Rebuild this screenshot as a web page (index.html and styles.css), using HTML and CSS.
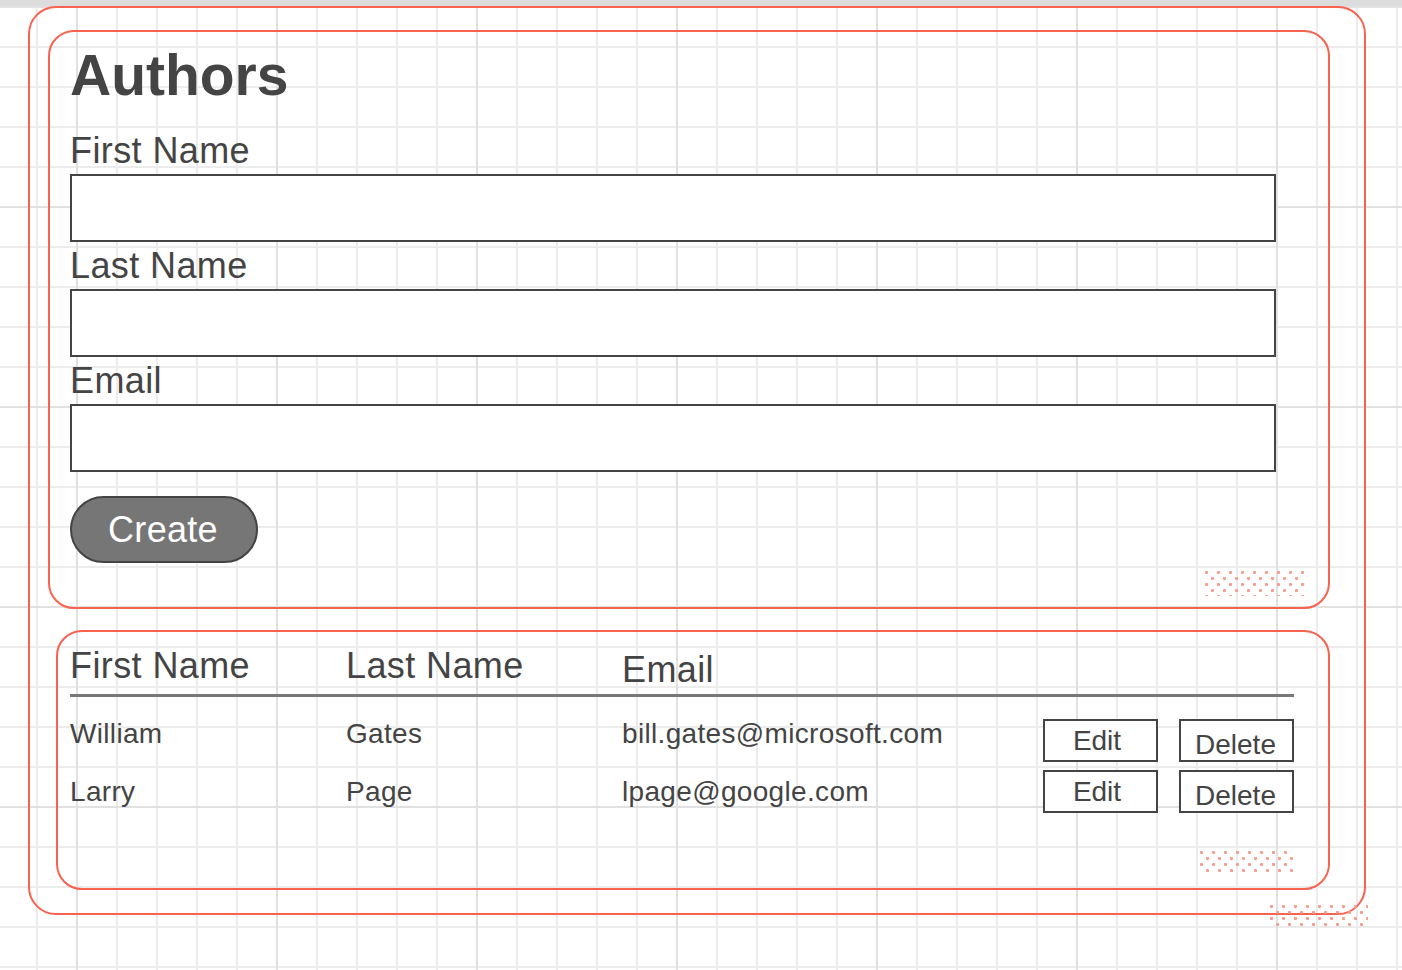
FILE: index.html
```html
<!DOCTYPE html>
<html lang="en">
<head>
<meta charset="utf-8">
<title>Authors</title>
<link rel="stylesheet" href="styles.css">
</head>
<body>
<div class="topbar"></div>
<div class="outer">
  <section class="card form-card">
    <h1 class="title">Authors</h1>
    <label class="field-label first">First Name</label>
    <div class="input"></div>
    <label class="field-label">Last Name</label>
    <div class="input"></div>
    <label class="field-label">Email</label>
    <div class="input"></div>
    <button class="create">Create</button>
    <div class="dots dots-form"></div>
  </section>
  <section class="card table-card">
    <div class="cols head">
      <div class="th">First Name</div>
      <div class="th">Last Name</div>
      <div class="th th-email">Email</div>
    </div>
    <div class="cols row row-1">
      <div class="td">William</div>
      <div class="td">Gates</div>
      <div class="td">bill.gates@microsoft.com</div>
      <button class="act edit">Edit</button>
      <button class="act del">Delete</button>
    </div>
    <div class="cols row row-2">
      <div class="td">Larry</div>
      <div class="td">Page</div>
      <div class="td">lpage@google.com</div>
      <button class="act edit">Edit</button>
      <button class="act del">Delete</button>
    </div>
    <div class="dots dots-table"></div>
  </section>
  <div class="dots dots-outer"></div>
</div>
</body>
</html>
```

FILE: styles.css
```css
html {
  background-color: #ffffff;
  background-image:
    linear-gradient(to right, #e1e1e1 2px, transparent 2px),
    linear-gradient(to bottom, #e1e1e1 2px, transparent 2px),
    linear-gradient(to right, #ececec 2px, transparent 2px),
    linear-gradient(to bottom, #ececec 2px, transparent 2px);
  background-size: 200px 200px, 200px 200px, 40px 40px, 40px 40px;
  background-position: 76px 0, 0 6px, 36px 0, 0 6px;
  min-height: 100%;
}

body {
  margin: 0;
  min-height: 970px;
  font-family: "Liberation Sans", Arial, sans-serif;
  color: #444444;
}

.topbar {
  height: 6px;
  background: #dcdcdc;
}

.outer {
  position: relative;
  box-sizing: border-box;
  width: 1338px;
  margin-left: 28px;
  border: 2px solid #f9624f;
  border-radius: 28px;
  padding: 22px 34px 23px 18px;
}

.card {
  position: relative;
  border: 2px solid #f9624f;
  border-radius: 26px;
}

.form-card {
  padding: 13px 52px 44px 20px;
}

.title {
  margin: 0;
  font-size: 57px;
  line-height: 60px;
  font-weight: bold;
}

.field-label {
  display: block;
  font-size: 36px;
  line-height: 47px;
  letter-spacing: 0.4px;
}

.field-label.first {
  margin-top: 22px;
}

.input {
  box-sizing: border-box;
  height: 68px;
  background: #ffffff;
  border: 2px solid #444444;
}

.create {
  display: block;
  box-sizing: border-box;
  margin-top: 24px;
  width: 188px;
  height: 67px;
  padding: 0 2px 0 0;
  background: #767676;
  border: 2px solid #444444;
  border-radius: 34px;
  color: #ffffff;
  font-family: "Liberation Sans", Arial, sans-serif;
  font-size: 36px;
  letter-spacing: 0.3px;
}

.table-card {
  margin-top: 21px;
  margin-left: 8px;
  padding: 0 34px 75px 12px;
}

.cols {
  display: grid;
  grid-template-columns: 276px 276px 421px 136px 115px;
  align-items: start;
}

.head {
  padding-top: 12px;
  padding-bottom: 2px;
  border-bottom: 3px solid #777777;
}

.th {
  font-size: 36px;
  line-height: 44px;
  letter-spacing: 0.4px;
}

.th-email {
  padding-top: 4px;
}

.td {
  font-size: 28px;
  line-height: 42px;
  letter-spacing: 0.33px;
}

.row-1 {
  margin-top: 16px;
}

.row-1 .act {
  margin-top: 6px;
}

.row-2 .td {
  margin-top: 9px;
}

.row-2 .act {
  margin-top: 8px;
}

.act {
  box-sizing: border-box;
  width: 115px;
  height: 43px;
  padding: 0;
  background: #ffffff;
  border: 2px solid #444444;
  color: #444444;
  font-family: "Liberation Sans", Arial, sans-serif;
  font-size: 28px;
  line-height: 39px;
}

.act.edit {
  padding-right: 7px;
}

.act.del {
  padding-top: 4px;
  padding-right: 2px;
}

.dots {
  position: absolute;
  z-index: 2;
  background-image:
    radial-gradient(circle at 1.5px 1.5px, #f99c8f 1.3px, transparent 1.8px),
    radial-gradient(circle at 7.5px 7.5px, #f99c8f 1.3px, transparent 1.8px);
  background-size: 12px 12px;
}

.dots-form {
  right: 23px;
  bottom: 11px;
  width: 100px;
  height: 25px;
}

.dots-table {
  right: 35px;
  bottom: 15px;
  width: 93px;
  height: 22px;
}

.dots-outer {
  right: -4px;
  bottom: -14px;
  width: 98px;
  height: 22px;
}
```
